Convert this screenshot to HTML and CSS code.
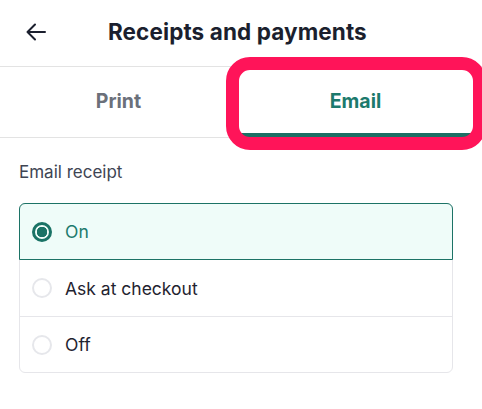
FILE: index.html
```html
<!DOCTYPE html>
<html>
<head>
<meta charset="utf-8">
<link rel="stylesheet" href="styles.css">
</head>
<body>
<div class="screen">
  <header class="header">
    <svg class="back" width="20" height="18" viewBox="0 0 20 18" fill="none" stroke="#1b1f2e" stroke-width="2" stroke-linecap="round" stroke-linejoin="round">
      <path d="M19 9H1.5M9 1.5L1.5 9L9 16.5"/>
    </svg>
    <h1 class="title">Receipts and payments</h1>
  </header>
  <nav class="tabs">
    <div class="tab">Print</div>
    <div class="tab active">Email</div>
  </nav>
  <section class="content">
    <div class="label">Email receipt</div>
    <div class="options">
      <div class="option selected"><span class="radio on"></span><span>On</span></div>
      <div class="option"><span class="radio"></span><span>Ask at checkout</span></div>
      <div class="option"><span class="radio"></span><span>Off</span></div>
    </div>
  </section>
  <div class="highlight"></div>
</div>
</body>
</html>
```
FILE: styles.css
```css
* { box-sizing: border-box; }
html, body { margin: 0; padding: 0; background: #fff; }
body { font-family: Inter, "Noto Sans", sans-serif; width: 482px; height: 409px; overflow: hidden; }
.screen { position: relative; width: 482px; height: 409px; }
.header {
  height: 67px;
  display: flex;
  align-items: center;
  padding: 0 0 3px 26px;
  border-bottom: 1px solid #e3e3e3;
}
.back { flex: none; display: block; }
.title {
  margin: 0 0 0 62px;
  font-size: 22.5px;
  font-weight: 700;
  color: #1b1f2e;
  letter-spacing: 0.1px;
}
.tabs {
  display: flex;
  height: 71px;
  padding-right: 8px;
  border-bottom: 1px solid #e3e3e3;
}
.tab {
  flex: 1;
  display: flex;
  align-items: center;
  justify-content: center;
  font-size: 19.5px;
  font-weight: 700;
  color: #6b707a;
  padding-bottom: 3px;
}
.tab.active {
  color: #1c7a6d;
  border-bottom: 4px solid #1c6f64;
  margin-right: -8px;
  padding-right: 8px;
  padding-top: 4px;
}
.content { padding: 0 29px 0 19px; }
.label {
  margin-top: 24px;
  height: 20px;
  font-size: 17px;
  color: #3e4553;
  line-height: 20px;
}
.options {
  margin-top: 21px;
  border: 1px solid #e6e6ea;
  border-radius: 6px;
}
.option {
  height: 56px;
  display: flex;
  align-items: center;
  gap: 13px;
  padding-left: 12px;
  font-size: 17.5px;
  color: #1f2330;
  border-top: 1px solid #e6e6ea;
}
.option:first-child { border-top: none; }
.option.selected {
  margin: -1px -1px 0;
  height: 57px;
  padding-left: 12px;
  background: #effcf9;
  border: 1px solid #1c7366;
  border-radius: 6px 6px 0 0;
  color: #1c7a6d;
}
.option.selected + .option { border-top: none; }
.radio {
  width: 20px;
  height: 20px;
  border-radius: 50%;
  border: 2px solid #e6e7eb;
  flex: none;
}
.radio.on {
  border: 3px solid #1a7366;
  background: radial-gradient(circle, #1a7366 0 5px, #effcf9 5.5px);
}
.highlight {
  position: absolute;
  left: 226px;
  top: 57px;
  width: 260px;
  height: 93px;
  border: 13px solid #ff1459;
  border-radius: 24px;
}
```
